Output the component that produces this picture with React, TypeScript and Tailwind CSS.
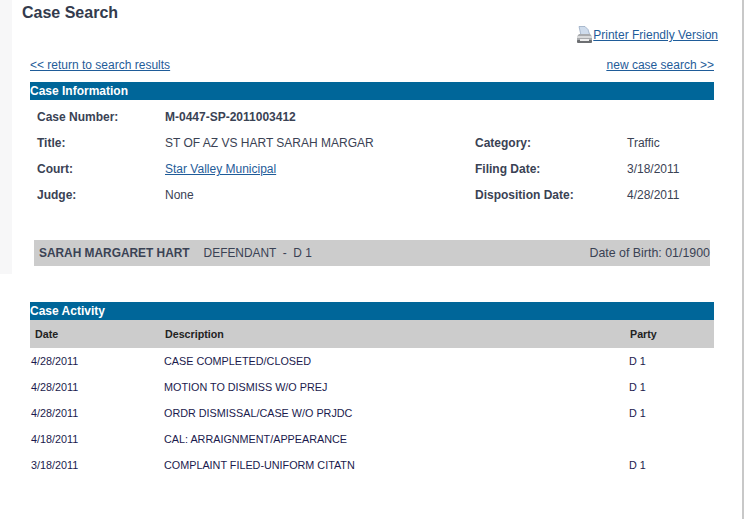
const font = "[font-family:'Liberation_Sans',Arial,sans-serif]";

const rows = [
  ["4/28/2011", "CASE COMPLETED/CLOSED", "D 1"],
  ["4/28/2011", "MOTION TO DISMISS W/O PREJ", "D 1"],
  ["4/28/2011", "ORDR DISMISSAL/CASE W/O PRJDC", "D 1"],
  ["4/18/2011", "CAL: ARRAIGNMENT/APPEARANCE", ""],
  ["3/18/2011", "COMPLAINT FILED-UNIFORM CITATN", "D 1"],
];

function PrinterIcon() {
  return (
    <svg width="17" height="18" viewBox="0 0 17 18" className="shrink-0">
      <path d="M3 .5h6l3 3 2 6H5z" fill="#cfdcec" stroke="#8fa3bd" strokeWidth="0.7" />
      <path d="M1 10.5 3 8h11l2 2.5V15H1z" fill="#a9abae" />
      <rect x="1" y="10" width="15" height="2" fill="#d9dadb" />
      <rect x="1" y="14" width="15" height="3" rx="1" fill="#6d6f72" />
      <rect x="4" y="13" width="9" height="2" fill="#eeeeee" />
    </svg>
  );
}

export default function App() {
  return (
    <div className={`flex h-[519px] w-[744px] overflow-hidden bg-white ${font}`}>
      <div className="h-[274px] w-3 shrink-0 bg-[#f7f7f8]" />
      <div className="flex flex-1 flex-col pl-[10px]">
        <h1 className="mt-[4px] h-[18px] text-[16px] leading-[18px] font-bold text-[#333b4d]">Case Search</h1>
        <div className="mt-[4px] mr-[24px] flex h-[18px] items-center justify-end">
          <PrinterIcon />
          <a className="text-[12px] leading-[14px] text-[#1f5c99] underline">Printer Friendly Version</a>
        </div>
        <div className="mt-[14px] ml-[8px] flex h-[14px] w-[684px] items-center justify-between text-[12px] text-[#1f5c99] underline">
          <a>&lt;&lt; return to search results</a>
          <a>new case search &gt;&gt;</a>
        </div>
        <div className="mt-[10px] ml-[8px] w-[684px]">
          <div className="h-[18px] bg-[#006699] text-[12px] leading-[18px] font-bold text-white">Case Information</div>
          <div className="mt-[4px] grid grid-cols-[128px_310px_152px_1fr] pl-[7px] text-[12px] text-[#3a4254] [&>*]:h-[26px] [&>*]:leading-[26px]">
            <div className="font-bold">Case Number:</div>
            <div className="col-span-3 font-bold">M-0447-SP-2011003412</div>
            <div className="font-bold">Title:</div>
            <div>ST OF AZ VS HART SARAH MARGAR</div>
            <div className="font-bold">Category:</div>
            <div>Traffic</div>
            <div className="font-bold">Court:</div>
            <div className="text-[#1f5c99] underline">Star Valley Municipal</div>
            <div className="font-bold">Filing Date:</div>
            <div>3/18/2011</div>
            <div className="font-bold">Judge:</div>
            <div>None</div>
            <div className="font-bold">Disposition Date:</div>
            <div>4/28/2011</div>
          </div>
          <div className="mx-[4px] mt-[32px] flex h-[26px] items-center justify-between bg-[#cccccc] pl-[5px] text-[#3a4254]">
            <div className="pt-[1px] text-[11.9px]">
              <span className="font-bold">SARAH MARGARET HART</span>
              <span className="ml-[14px] whitespace-pre">DEFENDANT  -  D 1</span>
            </div>
            <div className="text-[12.4px]">Date of Birth: 01/1900</div>
          </div>
          <div className="mt-[36px] h-[18px] bg-[#006699] text-[12px] leading-[18px] font-bold text-white">Case Activity</div>
          <div className="grid h-[28px] grid-cols-[130px_465px_1fr] items-center bg-[#cccccc] pl-[5px] text-[10.7px] font-bold text-[#222222]">
            <div>Date</div>
            <div>Description</div>
            <div>Party</div>
          </div>
          {rows.map((r, i) => (
            <div key={i} className="grid h-[26px] grid-cols-[133px_465px_1fr] items-center pl-[1px] text-[10.8px] text-[#1a1a4d]">
              <div>{r[0]}</div>
              <div>{r[1]}</div>
              <div>{r[2]}</div>
            </div>
          ))}
        </div>
      </div>
      <div className="h-full w-[2px] shrink-0 bg-[#c8c8c8]" />
    </div>
  );
}
